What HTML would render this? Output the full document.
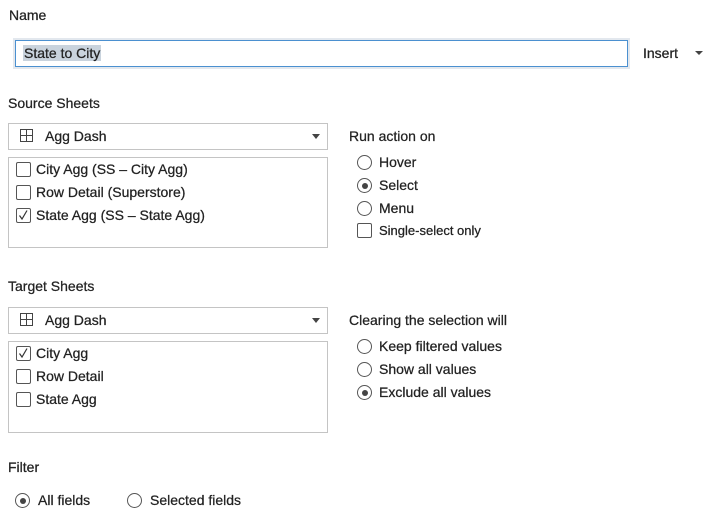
<!DOCTYPE html>
<html><head><style>
body{margin:0;width:710px;height:513px;background:#fff;font-family:"Liberation Sans",sans-serif;font-size:14px;color:#222;position:relative;overflow:hidden}
.a{position:absolute;white-space:nowrap;line-height:16px;-webkit-text-stroke:0.25px #222}
.box{position:absolute;border:1px solid #c4c4c4;box-sizing:border-box}
.cb{position:absolute;width:15px;height:15px;border:1px solid #555;border-radius:2px;box-sizing:border-box}
.rd{position:absolute;width:15px;height:15px;border:1px solid #555;border-radius:50%;box-sizing:border-box}
.rd.on::after{content:"";position:absolute;left:3.5px;top:3.5px;width:6px;height:6px;border-radius:50%;background:#444}
.tri{position:absolute;width:0;height:0;border-left:4.5px solid transparent;border-right:4.5px solid transparent;border-top:5px solid #444}
</style></head><body>
<div class="a" style="left:9px;top:7px">Name</div>
<div class="box" style="left:15px;top:40px;width:613px;height:27px;border:1.5px solid #4b90d0;box-shadow:0 0 0 2px #e3e8ee"></div>
<div class="a" style="left:23px;top:45px;background:#c9d3dd;padding:0 1px">State to City</div>
<div class="a" style="left:643px;top:45px">Insert</div>
<div class="tri" style="left:695px;top:51px;border-left-width:4px;border-right-width:4px;border-top-width:4px"></div>

<div class="a" style="left:8px;top:95px">Source Sheets</div>
<div class="box" style="left:8px;top:123px;width:320px;height:27px"></div>
<svg class="a" style="left:20px;top:129px" width="13" height="13"><rect x="0.5" y="0.5" width="12" height="12" fill="none" stroke="#444"/><path d="M6.5 0.5V12.5M0.5 6.5H12.5" stroke="#444"/></svg>
<div class="a" style="left:45px;top:128px">Agg Dash</div>
<div class="tri" style="left:312px;top:134px"></div>
<div class="box" style="left:8px;top:157px;width:320px;height:91px"></div>
<div class="cb" style="left:16px;top:162px"></div><div class="a" style="left:36px;top:161px">City Agg (SS – City Agg)</div>
<div class="cb" style="left:16px;top:185px"></div><div class="a" style="left:36px;top:184px">Row Detail (Superstore)</div>
<div class="cb" style="left:16px;top:208px"></div><svg class="a" style="left:16px;top:208px" width="15" height="15"><path d="M3.5 7.5L6 11L11 2.5" fill="none" stroke="#333" stroke-width="1.2"/></svg><div class="a" style="left:36px;top:207px">State Agg (SS – State Agg)</div>

<div class="a" style="left:349px;top:128px">Run action on</div>
<div class="rd" style="left:357px;top:155px"></div><div class="a" style="left:379px;top:154px">Hover</div>
<div class="rd on" style="left:357px;top:178px"></div><div class="a" style="left:379px;top:177px">Select</div>
<div class="rd" style="left:357px;top:201px"></div><div class="a" style="left:379px;top:200px">Menu</div>
<div class="cb" style="left:357px;top:223px"></div><div class="a" style="left:379px;top:223px;font-size:13px">Single-select only</div>

<div class="a" style="left:8px;top:278px">Target Sheets</div>
<div class="box" style="left:8px;top:307px;width:320px;height:27px"></div>
<svg class="a" style="left:20px;top:313px" width="13" height="13"><rect x="0.5" y="0.5" width="12" height="12" fill="none" stroke="#444"/><path d="M6.5 0.5V12.5M0.5 6.5H12.5" stroke="#444"/></svg>
<div class="a" style="left:45px;top:312px">Agg Dash</div>
<div class="tri" style="left:312px;top:318px"></div>
<div class="box" style="left:8px;top:341px;width:320px;height:92px"></div>
<div class="cb" style="left:16px;top:346px"></div><svg class="a" style="left:16px;top:346px" width="15" height="15"><path d="M3.5 7.5L6 11L11 2.5" fill="none" stroke="#333" stroke-width="1.2"/></svg><div class="a" style="left:36px;top:345px">City Agg</div>
<div class="cb" style="left:16px;top:369px"></div><div class="a" style="left:36px;top:368px">Row Detail</div>
<div class="cb" style="left:16px;top:392px"></div><div class="a" style="left:36px;top:391px">State Agg</div>

<div class="a" style="left:349px;top:312px">Clearing the selection will</div>
<div class="rd" style="left:357px;top:339px"></div><div class="a" style="left:379px;top:338px">Keep filtered values</div>
<div class="rd" style="left:357px;top:362px"></div><div class="a" style="left:379px;top:361px">Show all values</div>
<div class="rd on" style="left:357px;top:385px"></div><div class="a" style="left:379px;top:384px">Exclude all values</div>

<div class="a" style="left:8px;top:459px">Filter</div>
<div class="rd on" style="left:15px;top:493px"></div><div class="a" style="left:38px;top:492px">All fields</div>
<div class="rd" style="left:127px;top:493px"></div><div class="a" style="left:150px;top:492px">Selected fields</div>
</body></html>
